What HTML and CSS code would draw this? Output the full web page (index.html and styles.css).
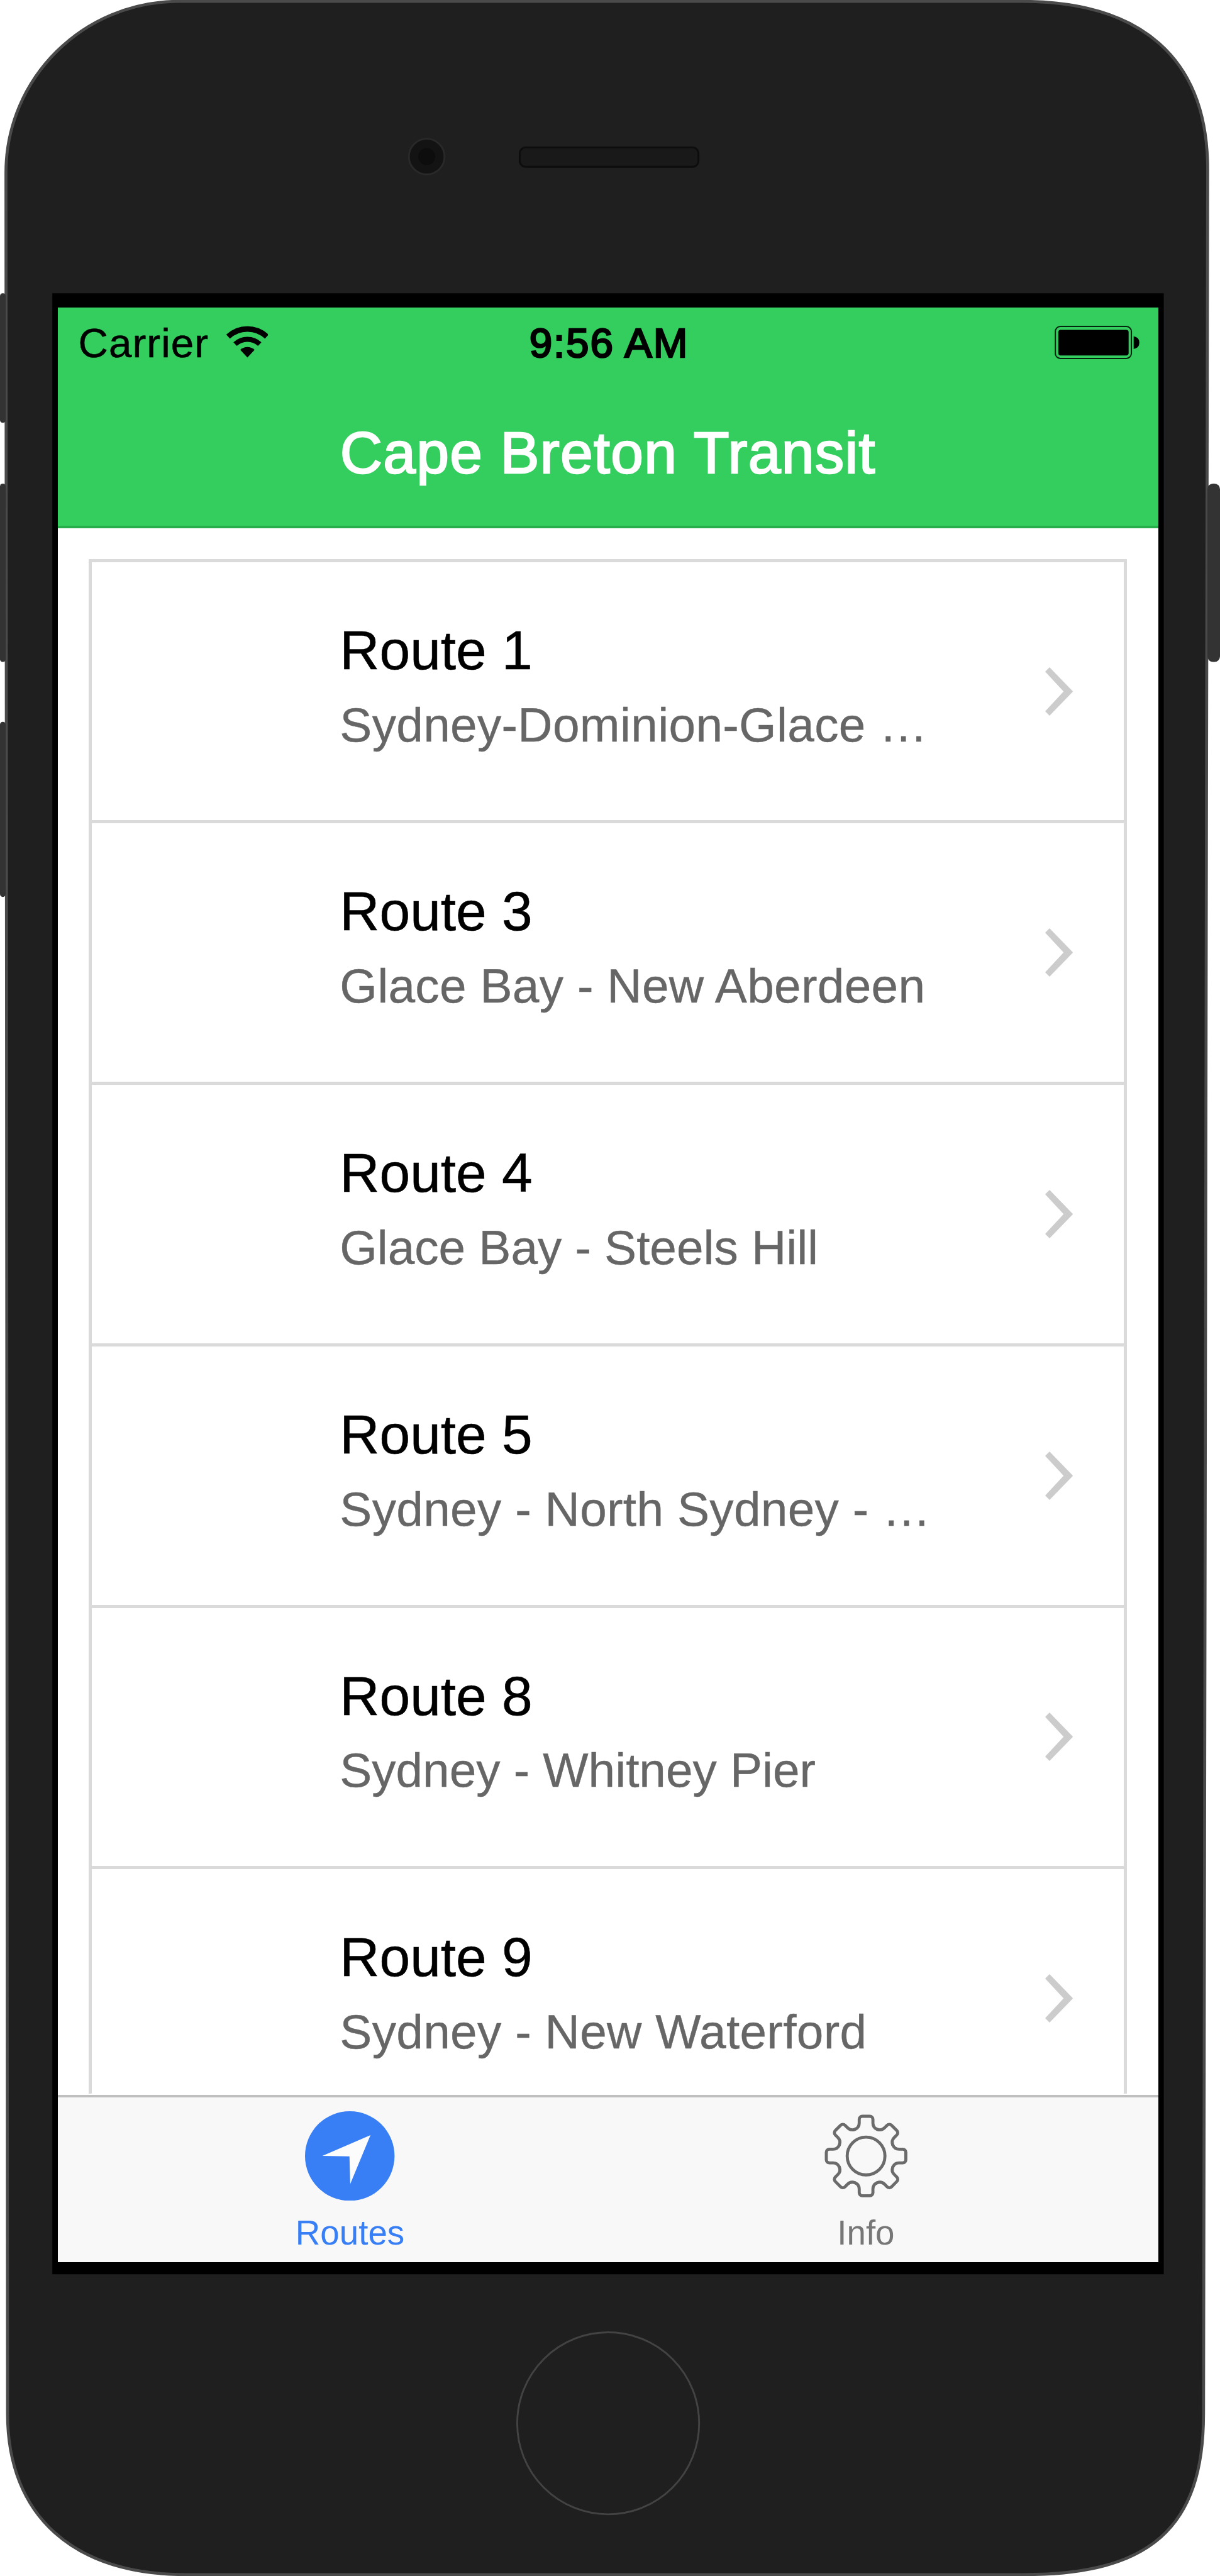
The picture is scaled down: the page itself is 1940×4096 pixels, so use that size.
FILE: index.html
```html
<!DOCTYPE html>
<html lang="en">
<head>
<meta charset="utf-8">
<title>Cape Breton Transit</title>
<link rel="stylesheet" href="styles.css">
</head>
<body>
<div class="phone">
  <svg class="phone-shell" viewBox="0 0 2669 5635" preserveAspectRatio="none" aria-hidden="true">
    <path d="M391 3 H2235 C2495 3 2642 126 2642 370 L2633 5280 C2633 5530 2516 5632 2240 5632 H408 C160 5632 16.5 5503 16.5 5280 L13 378 C13 171 182 3 391 3 Z" fill="#1f1f1f" stroke="#4a4a4a" stroke-width="6.5"/>
    <g fill="#333">
      <rect x="0" y="641.5" width="12.5" height="283.5" rx="6"/>
      <rect x="0" y="1058" width="12.5" height="390" rx="6"/>
      <rect x="0" y="1579" width="12.5" height="383" rx="6"/>
      <rect x="2641.5" y="1058" width="27.5" height="390" rx="12"/>
    </g>
    <circle cx="933.5" cy="342.5" r="39" fill="#131313" stroke="#292929" stroke-width="4"/>
    <circle cx="933.5" cy="342.5" r="18.5" fill="#0d0d0e"/>
    <rect x="1137" y="322.5" width="391" height="42.5" rx="13" fill="#191919" stroke="#0d0d0d" stroke-width="4"/>
    <circle cx="1330.5" cy="5301" r="199" fill="none" stroke="#434343" stroke-width="4"/>
    <rect x="114.5" y="641.5" width="2431.5" height="4333.5" fill="#000"/>
  </svg>

  <main class="screen">
    <header class="header">
      <div class="status-bar">
        <div class="status-left">
          <span class="carrier">Carrier</span>
          <svg class="wifi" viewBox="496 713 92 70" aria-hidden="true">
            <g fill="none" stroke="#000">
              <path d="M499.7 736.7 A62 62 0 0 1 584.3 736.7" stroke-width="12"/>
              <path d="M515.1 753.1 A39.5 39.5 0 0 1 568.9 753.1" stroke-width="11"/>
            </g>
            <path d="M542 782.5 L526.3 765.7 A23 23 0 0 1 557.7 765.7 Z"/>
          </svg>
        </div>
        <time class="clock">9:56 AM</time>
        <svg class="battery" viewBox="2308 713 186 73" aria-hidden="true">
          <rect x="2309.5" y="714.5" width="166.5" height="70" rx="11" fill="none" stroke="#03240d" stroke-width="2.8"/>
          <rect x="2316" y="722" width="154" height="56" rx="5"/>
          <path d="M2481 736 Q2493.5 738 2493.5 749.7 Q2493.5 761.5 2481 763.5 Z"/>
        </svg>
      </div>
      <h1 class="title">Cape Breton Transit</h1>
    </header>

    <section class="content">
      <ul class="routes">
        <li class="route">
          <div class="route-text"><h2 class="route-name">Route 1</h2><p class="route-path">Sydney-Dominion-Glace …</p></div>
          <svg class="chevron" viewBox="0 0 61 106"><path d="M9.6 0 61 53 9.6 106 0 96.5 40.3 53 0 9.5Z"/></svg>
        </li>
        <li class="route">
          <div class="route-text"><h2 class="route-name">Route 3</h2><p class="route-path">Glace Bay - New Aberdeen</p></div>
          <svg class="chevron" viewBox="0 0 61 106"><path d="M9.6 0 61 53 9.6 106 0 96.5 40.3 53 0 9.5Z"/></svg>
        </li>
        <li class="route">
          <div class="route-text"><h2 class="route-name">Route 4</h2><p class="route-path route-path-tight">Glace Bay - Steels Hill</p></div>
          <svg class="chevron" viewBox="0 0 61 106"><path d="M9.6 0 61 53 9.6 106 0 96.5 40.3 53 0 9.5Z"/></svg>
        </li>
        <li class="route">
          <div class="route-text"><h2 class="route-name">Route 5</h2><p class="route-path">Sydney - North Sydney - …</p></div>
          <svg class="chevron" viewBox="0 0 61 106"><path d="M9.6 0 61 53 9.6 106 0 96.5 40.3 53 0 9.5Z"/></svg>
        </li>
        <li class="route">
          <div class="route-text"><h2 class="route-name">Route 8</h2><p class="route-path route-path-tight">Sydney - Whitney Pier</p></div>
          <svg class="chevron" viewBox="0 0 61 106"><path d="M9.6 0 61 53 9.6 106 0 96.5 40.3 53 0 9.5Z"/></svg>
        </li>
        <li class="route">
          <div class="route-text"><h2 class="route-name">Route 9</h2><p class="route-path">Sydney - New Waterford</p></div>
          <svg class="chevron" viewBox="0 0 61 106"><path d="M9.6 0 61 53 9.6 106 0 96.5 40.3 53 0 9.5Z"/></svg>
        </li>
      </ul>
    </section>

    <nav class="tabs">
      <a class="tab tab-active">
        <svg class="tab-icon" viewBox="0 0 588 588" aria-hidden="true">
          <circle cx="294" cy="294" r="294" fill="#387ef5"/>
          <path d="M430 157 L114 293 L292 296 L297 478 Z" fill="#fcfcfc"/>
        </svg>
        <span>Routes</span>
      </a>
      <a class="tab">
        <svg class="tab-icon" viewBox="-294 -294 588 588" aria-hidden="true">
          <defs>
            <path id="tooth" d="M-72.7 -175.5 A45 45 0 0 0 -45 -217 V-241 A20 20 0 0 1 -25 -261 H25 A20 20 0 0 1 45 -241 V-217 A45 45 0 0 0 72.7 -175.5"/>
          </defs>
          <g fill="none" stroke="#6b6b6b" stroke-width="20" stroke-linecap="round">
            <use href="#tooth"/>
            <use href="#tooth" transform="rotate(45)"/>
            <use href="#tooth" transform="rotate(90)"/>
            <use href="#tooth" transform="rotate(135)"/>
            <use href="#tooth" transform="rotate(180)"/>
            <use href="#tooth" transform="rotate(225)"/>
            <use href="#tooth" transform="rotate(270)"/>
            <use href="#tooth" transform="rotate(315)"/>
            <circle r="124"/>
          </g>
        </svg>
        <span>Info</span>
      </a>
    </nav>
  </main>
</div>
</body>
</html>
```
FILE: styles.css
```css
* { box-sizing: border-box; }

body {
  margin: 0;
  background: #fff;
  font-family: "Liberation Sans", Arial, sans-serif;
}

h1, h2, p, ul { margin: 0; padding: 0; }

.phone {
  position: relative;
  width: 1940px;
  height: 4096px;
  padding: 489.2px 98.2px 0 91.6px;
  overflow: hidden;
}

.phone-shell {
  position: absolute;
  inset: 0;
  width: 100%;
  height: 100%;
}

.screen {
  position: relative;
  display: flex;
  flex-direction: column;
  height: 3108.2px;
  background: #fff;
}

.header {
  flex: none;
  height: 350.4px;
  background: #34ce5f;
  border-bottom: 4px solid #27af4c;
}

.status-bar {
  display: grid;
  grid-template-columns: 1fr auto 1fr;
  align-items: start;
  height: 110.4px;
  padding: 1.7px 29.5px 0 33px;
  font-size: 65.6px;
  line-height: 109.4px;
}

.status-left { display: flex; gap: 27.5px; }

.carrier {
  letter-spacing: 1px;
  -webkit-text-stroke: 0.5px #000;
}

.wifi {
  width: 66.9px;
  height: 50.9px;
  margin-top: 27.5px;
}

.clock {
  letter-spacing: 1.8px;
  -webkit-text-stroke: 2.6px #000;
}

.battery {
  justify-self: end;
  width: 135.2px;
  height: 53px;
  margin-top: 27.5px;
}

.title {
  color: #fff;
  font-size: 93px;
  font-weight: 400;
  line-height: 240.6px;
  letter-spacing: 1.3px;
  text-align: center;
  -webkit-text-stroke: 2.4px #fff;
}

.content {
  flex: none;
  height: 2489px;
  padding: 49.2px 49.4px 0;
  overflow: hidden;
}

.routes {
  list-style: none;
  border: solid #dadada;
  border-width: 0 5px;
}

.route {
  display: flex;
  align-items: center;
  justify-content: space-between;
  height: 415.7px;
  padding: 0 81.6px 0 394.3px;
  border-top: 5px solid #dadada;
}

.route-text {
  align-self: flex-start;
  padding-top: 85px;
  white-space: nowrap;
}

.route-name {
  font-size: 87.5px;
  font-weight: 400;
  line-height: 110px;
  color: #000;
  -webkit-text-stroke: 0.6px #000;
}

.route-path {
  margin-top: 8.8px;
  font-size: 76.6px;
  line-height: 110px;
  letter-spacing: 0.3px;
  color: #666;
  -webkit-text-stroke: 0.4px #666;
}

.route-path-tight { letter-spacing: -0.05px; }

.chevron {
  flex: none;
  width: 44.3px;
  height: 77px;
  fill: #ccc;
}

.tabs {
  display: flex;
  flex: 1;
  justify-content: center;
  margin-top: 2px;
  border-top: 4px solid #bfbfbf;
  background: #f8f8f8;
}

.tab {
  display: flex;
  flex-direction: column;
  align-items: center;
  width: 820.4px;
  padding-top: 22px;
  color: #777;
  font-size: 54.7px;
  line-height: 60px;
}

.tab-active { color: #387ef5; }

.tab-icon {
  width: 142.4px;
  height: 142.4px;
  margin-bottom: 21.5px;
}
```
